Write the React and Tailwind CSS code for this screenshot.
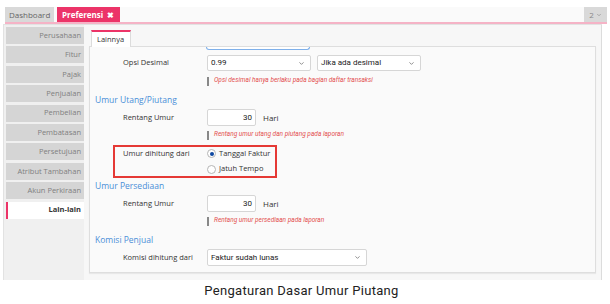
import { ChevronDown } from 'lucide-react';

const ui = { fontFamily: '"Open Sans", "Noto Sans", sans-serif' };
const field = { fontFamily: 'Roboto, "Liberation Sans", sans-serif' };

const menu = [
  'Perusahaan',
  'Fitur',
  'Pajak',
  'Penjualan',
  'Pembelian',
  'Pembatasan',
  'Persetujuan',
  'Atribut Tambahan',
  'Akun Perkiraan',
];

function Select({ value, width }) {
  return (
    <div
      className={`${width} h-full flex items-center justify-between pl-[3px] pr-[5px] bg-white border border-[#d6d6d6] rounded-[2px] text-[8px] text-[#222]`}
      style={field}
    >
      <span>{value}</span>
      <ChevronDown className="w-[7px] h-[7px] text-[#666]" strokeWidth={2.5} />
    </div>
  );
}

function NumberInput({ value }) {
  return (
    <div className="flex items-center h-full">
      <div
        className="w-[49px] h-full flex items-center justify-end pr-[3px] bg-white border border-[#d6d6d6] rounded-[2px] text-[8px] text-[#222]"
        style={field}
      >
        {value}
      </div>
      <span className="ml-[7px] text-[8px] text-[#333]" style={ui}>Hari</span>
    </div>
  );
}

function Row({ label, h = 'h-[17px]', mt, children }) {
  return (
    <div className={`flex items-center ${h} ${mt} pl-[33px]`}>
      <div className="w-[84px] text-[7.5px] text-[#333]" style={ui}>{label}</div>
      {children}
    </div>
  );
}

function Hint({ text, mt }) {
  return (
    <div className={`flex items-center h-[10px] ${mt} pl-[117px]`}>
      <div className="w-[2px] h-[9px] bg-[#888]" />
      <span className="ml-[5px] text-[6.5px] italic text-[#e35050]" style={field}>{text}</span>
    </div>
  );
}

function Heading({ text, mt }) {
  return (
    <div className={`h-[12px] ${mt} pl-[5px] text-[8.5px] leading-[12px] text-[#4a8fd8]`} style={ui}>
      {text}
    </div>
  );
}

function Radio({ checked, label }) {
  return (
    <div className="flex items-center h-[13px]">
      <div className="w-[9px] h-[9px] rounded-full border border-[#b5b5b5] bg-white flex items-center justify-center">
        {checked && <div className="w-[4px] h-[4px] rounded-full bg-[#0d47a1]" />}
      </div>
      <span className="ml-[3px] text-[7.5px] text-[#333]" style={ui}>{label}</span>
    </div>
  );
}

export default function App() {
  return (
    <div className="w-[610px] h-[304px] bg-white relative overflow-hidden" style={ui}>
      {/* Top tabs */}
      <div className="pt-[7px] pl-[5px] pr-[3px]">
        <div className="flex h-[15px] bg-[#fafafa]">
          <div className="w-[49px] bg-[#d9d9d9] flex items-center pl-[4px] text-[8px] text-[#666]">Dashboard</div>
          <div className="ml-[3px] w-[63px] bg-[#ec3468] flex items-center justify-between pl-[5px] pr-[6px] text-[8px] font-bold text-white">
            <span>Preferensi</span>
            <span className="text-[8px]">✖</span>
          </div>
          <div className="flex-1" />
          <div className="w-[23px] bg-[#d9d9d9] flex items-center justify-center gap-[2px] text-[8px] text-[#888]">
            2<ChevronDown className="w-[6px] h-[6px]" strokeWidth={2.5} />
          </div>
        </div>
        <div className="h-[2px] bg-[#f5b3c6]" />
      </div>

      {/* Panel */}
      <div className="ml-[3px] mr-[8px] h-[256px] flex border-l border-t border-[#e2e2e2] bg-[#f0f0f0]">
        {/* Sidebar */}
        <div className="w-[80px] pl-[2px] pt-[2px] flex flex-col gap-[2.4px]">
          {menu.map((m) => (
            <div key={m} className="h-[17px] bg-[#d5d5d5] flex items-center justify-end pr-[3px] text-[7.5px] text-[#808080]">
              {m}
            </div>
          ))}
          <div className="h-[17px] bg-white border-l-2 border-[#ec3468] flex items-center justify-end pr-[3px] text-[7.5px] font-bold text-[#333]">
            Lain-lain
          </div>
        </div>

        {/* Content area */}
        <div className="flex-1 bg-[#f7f7f7] border-r border-[#dcdcdc] pl-[5px] pr-[5px] pt-[5px] flex flex-col">
          <div className="ml-[2px] w-[40px] h-[17px] bg-white border-t-2 border-[#ec3468] border-x border-x-[#dcdcdc] flex items-center pl-[5px] text-[7.5px] text-[#333] relative z-10">
            Lainnya
          </div>
          <div className="h-[227px] -mt-px bg-[#fafafa] border border-[#dedede] shadow-[0_1px_1px_rgba(0,0,0,0.06)] overflow-hidden">
            <div className="ml-[116px] w-[104px] h-[3px] bg-white border-x border-b border-[#7fb0ea] rounded-b-[3px]" />

            <Row label="Opsi Desimal" h="h-[16px]" mt="mt-[5px]">
              <Select value="0.99" width="w-[104px]" />
              <div className="w-[6px]" />
              <Select value="Jika ada desimal" width="w-[104px]" />
            </Row>
            <Hint text="Opsi desimal hanya berlaku pada bagian daftar transaksi" mt="mt-[5px]" />

            <Heading text="Umur Utang/Piutang" mt="mt-[8px]" />
            <Row label="Rentang Umur" mt="mt-[3px]">
              <NumberInput value="30" />
            </Row>
            <Hint text="Rentang umur utang dan piutang pada laporan" mt="mt-[4px]" />

            <div className="mt-[5px] ml-[23px] w-[164px] h-[33px] border-2 border-[#e53935] pl-[8px] flex">
              <div className="w-[84px] h-[13px] flex items-center text-[7.5px] text-[#333]">Umur dihitung dari</div>
              <div className="flex flex-col gap-[2.6px]">
                <Radio checked label="Tanggal Faktur" />
                <Radio label="Jatuh Tempo" />
              </div>
            </div>

            <Heading text="Umur Persediaan" mt="mt-[2px]" />
            <Row label="Rentang Umur" mt="mt-[3px]">
              <NumberInput value="30" />
            </Row>
            <Hint text="Rentang umur persediaan pada laporan" mt="mt-[4px]" />

            <Heading text="Komisi Penjual" mt="mt-[8px]" />
            <Row label="Komisi dihitung dari" mt="mt-[3px]">
              <Select value="Faktur sudah lunas" width="w-[160px]" />
            </Row>
          </div>
        </div>
      </div>

      {/* Caption */}
      <div
        className="mt-[1px] pr-[7px] text-center text-[13px] text-[#222] tracking-[0.3px]"
        style={{ fontFamily: 'Roboto, "Liberation Sans", sans-serif' }}
      >
        Pengaturan Dasar Umur Piutang
      </div>
    </div>
  );
}
